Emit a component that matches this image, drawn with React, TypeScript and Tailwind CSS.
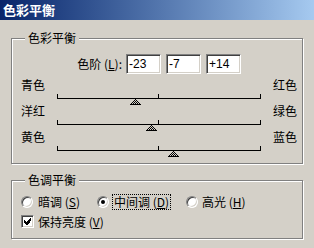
import type { ReactNode } from "react"

const TRACK_W = 204

function Group({ title, className, children }: { title: string; className?: string; children: ReactNode }) {
  return (
    <div className={`relative border border-[#808080] shadow-[inset_1px_1px_0_#fff,1px_1px_0_#fff] ${className ?? ""}`}>
      <span className="absolute left-[13px] top-[-8px] bg-[#d4d0c8] px-[3px] leading-[14px]">{title}</span>
      {children}
    </div>
  )
}

function Thumb() {
  // dithered triangle, like the old Photoshop slider knob
  const px: ReactNode[] = []
  for (let r = 0; r < 6; r++) {
    for (let x = 5 - r; x <= 5 + r; x++) {
      const edge = x === 5 - r || x === 5 + r || r === 5
      const on = edge || (x + r) % 2 === 1
      if (on) px.push(<rect key={`${r}-${x}`} x={x} y={r} width={1} height={1} fill="#000" />)
    }
  }
  return (
    <svg width="11" height="6" viewBox="0 0 11 6" shapeRendering="crispEdges">
      {px}
    </svg>
  )
}

function Slider({ left, right, value }: { left: string; right: string; value: number }) {
  const pos = Math.round(((value + 100) / 200) * (TRACK_W - 1))
  return (
    <div className="flex h-[26px]">
      <div className="w-[45px] pl-[9px] leading-[14px]">{left}</div>
      <div className="relative mt-[16px] h-[5px] w-[204px] border-b border-black">
        <div className="absolute left-0 top-0 h-[4px] w-px bg-black" />
        <div className="absolute left-[101px] top-0 h-[4px] w-px bg-black" />
        <div className="absolute right-0 top-0 h-[4px] w-px bg-black" />
        <div className="absolute top-[5px] flex" style={{ left: pos - 5 }}>
          <Thumb />
        </div>
      </div>
      <div className="ml-[12px] leading-[14px]">{right}</div>
    </div>
  )
}

function LevelInput({ value }: { value: string }) {
  return (
    <div className="flex h-[20px] w-[35px] items-center border border-b-white border-l-[#808080] border-r-white border-t-[#808080] bg-white pl-[2px] font-['Liberation_Sans',sans-serif] text-[12px] shadow-[inset_1px_1px_0_#404040,inset_-1px_-1px_0_#d4d0c8]">
      {value}
    </div>
  )
}

function Radio({ checked }: { checked?: boolean }) {
  return (
    <div className="flex h-[12px] w-[12px] items-center justify-center rounded-full border border-b-white border-l-[#808080] border-r-white border-t-[#808080] bg-white shadow-[inset_1px_1px_0_#404040,inset_-1px_-1px_0_#d4d0c8]">
      {checked && <div className="h-[4px] w-[4px] rounded-full bg-black" />}
    </div>
  )
}

function Checkbox() {
  return (
    <div className="flex h-[13px] w-[13px] items-center justify-center border border-b-white border-l-[#808080] border-r-white border-t-[#808080] bg-white shadow-[inset_1px_1px_0_#404040,inset_-1px_-1px_0_#d4d0c8]">
      <svg width="7" height="7" viewBox="0 0 7 7" shapeRendering="crispEdges">
        <path d="M6 0h1v3h-1zM5 1h1v4h-1zM4 2h1v4h-1zM3 3h1v4h-1zM2 4h1v3h-1zM1 3h1v3h-1zM0 2h1v3h-1z" fill="#000" />
      </svg>
    </div>
  )
}

export default function App() {
  return (
    <div className="h-[248px] w-[314px] overflow-hidden bg-[#d4d0c8] font-['Noto_Sans_CJK_SC',sans-serif] text-[12px] text-black">
      {/* Title bar */}
      <div className="h-[20px] bg-gradient-to-r from-[#0a246a] to-[#a6caf0] pl-[3px] text-[13px] font-bold leading-[20px] text-white">
        色彩平衡
      </div>

      <div className="px-[11px] pt-[18px]">
        <Group title="色彩平衡" className="h-[126px]">
          <div className="mt-[15px] flex h-[20px] items-center">
            <div className="w-[110px] text-right leading-[14px]">
              色阶 (<u>L</u>):
            </div>
            <div className="ml-[4px] flex gap-[5px]">
              <LevelInput value="-23" />
              <LevelInput value="-7" />
              <LevelInput value="+14" />
            </div>
          </div>
          <div className="mt-[4px]">
            <Slider left="青色" right="红色" value={-23} />
            <Slider left="洋红" right="绿色" value={-7} />
            <Slider left="黄色" right="蓝色" value={14} />
          </div>
        </Group>

        <Group title="色调平衡" className="mt-[16px] h-[59px]">
          <div className="mt-[13px] flex h-[16px] items-center pl-[9px]">
            <div className="flex w-[76px] items-center">
              <Radio />
              <span className="ml-[5px] leading-[14px]">
                暗调 (<u>S</u>)
              </span>
            </div>
            <div className="flex w-[89px] items-center">
              <Radio checked />
              <span className="ml-[3px] border border-dotted border-black px-[1px] leading-[14px]">
                中间调 (<u>D</u>)
              </span>
            </div>
            <div className="flex items-center">
              <Radio />
              <span className="ml-[4px] leading-[14px]">
                高光 (<u>H</u>)
              </span>
            </div>
          </div>
          <div className="mt-[4px] flex h-[15px] items-center pl-[9px]">
            <Checkbox />
            <span className="ml-[4px] leading-[14px]">
              保持亮度 (<u>V</u>)
            </span>
          </div>
        </Group>
      </div>
    </div>
  )
}
